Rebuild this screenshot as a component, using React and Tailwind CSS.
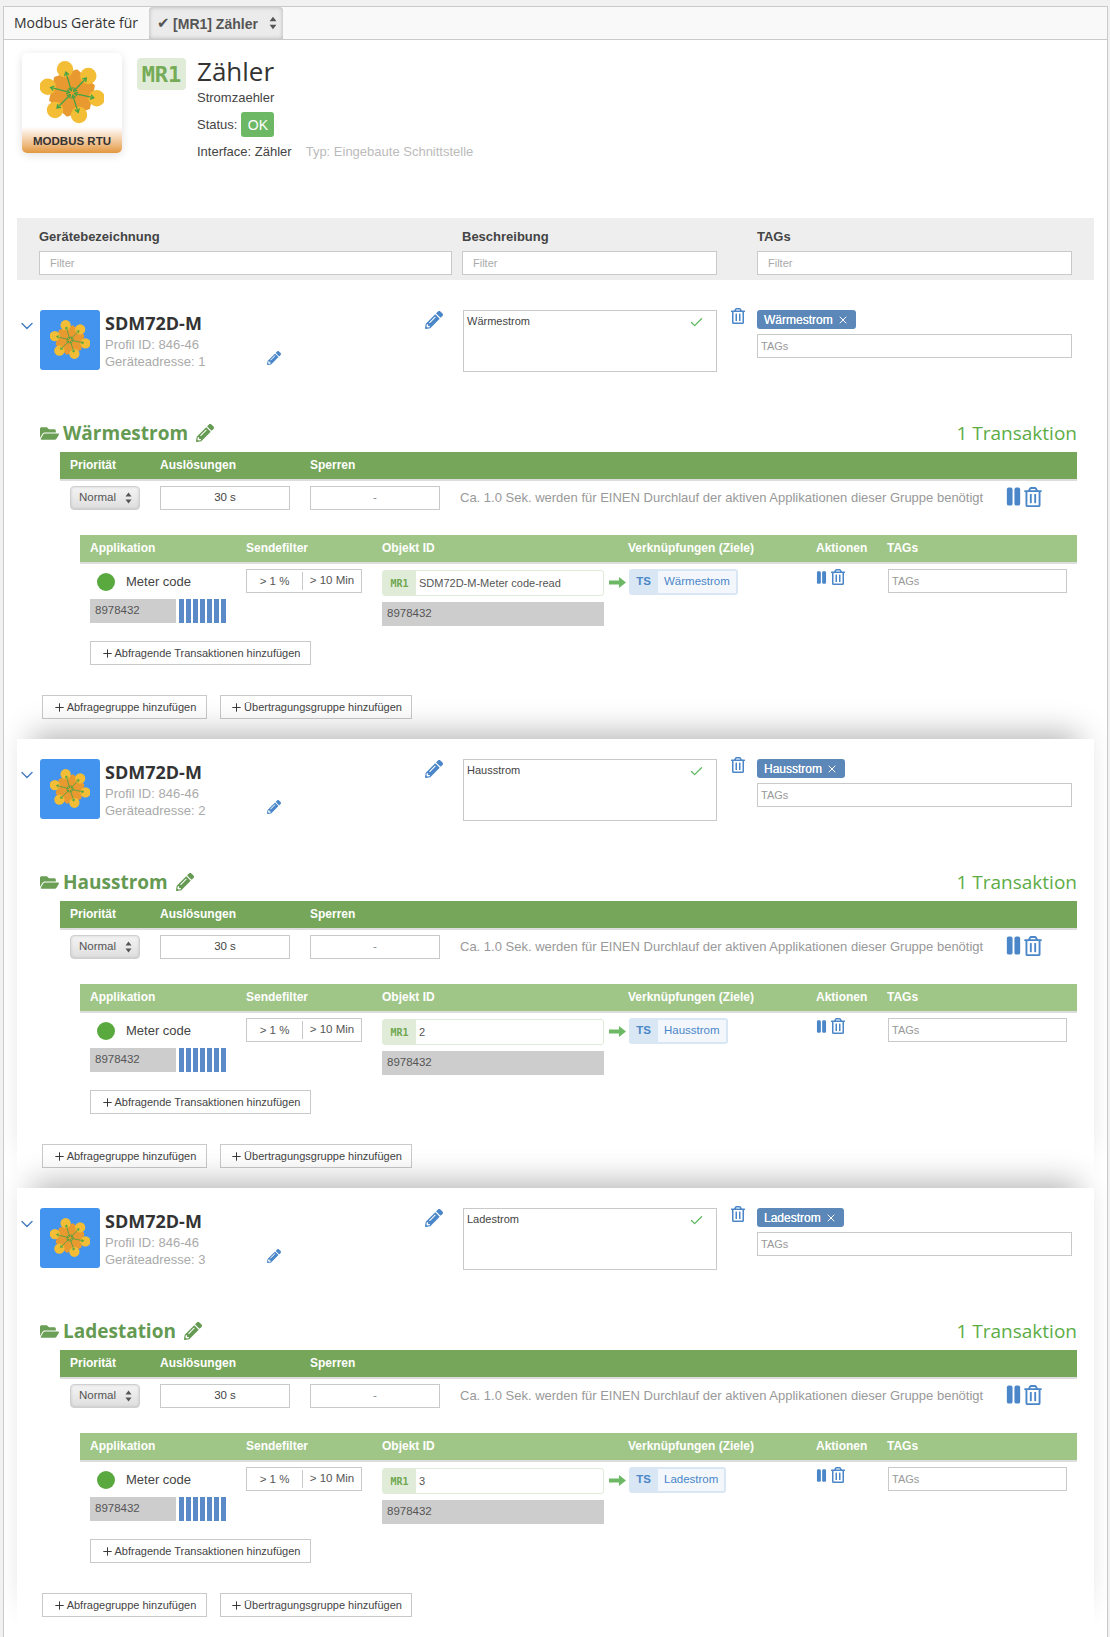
import React from "react";
import { FaPencilAlt, FaFolderOpen, FaRegTrashAlt } from "react-icons/fa";
import { Plus, X, Check, ChevronDown } from "lucide-react";

const sans = "font-['Liberation_Sans',Arial,sans-serif]";
const open = "font-['Open_Sans',sans-serif]";
const mono = "font-['DejaVu_Sans_Mono',monospace]";

const pts = [
  [-7, -23.7],
  [16.3, -17],
  [24.7, 5.3],
  [7, 22],
  [-17, 17],
  [-24.3, -6.3],
];

function Logo({ size }) {
  return (
    <svg width={size} height={size} viewBox="-32 -32 64 64" className="block">
      <polygon points="-12,-21 12,-21 24,0 12,21 -12,21 -24,0" fill="#e8992f" transform="rotate(42)" />
      {pts.map(([x, y], i) => (
        <circle key={i} cx={x} cy={y} r="8.2" fill="#f4bd36" />
      ))}
      {pts.map(([x, y], i) => {
        const a = Math.atan2(y, x);
        const c = Math.cos(a);
        const s = Math.sin(a);
        const tx = x * 0.88;
        const ty = y * 0.88;
        const sx = 2.5 * c;
        const sy = 2.5 * s;
        const hx = (bx, by) => `${bx},${by}`;
        return (
          <g key={i} stroke="#45a345" strokeWidth="1.3" fill="none">
            <line x1={sx} y1={sy} x2={tx} y2={ty} />
            <polyline
              points={`${hx(tx - 3.4 * c + 2.4 * s, ty - 3.4 * s - 2.4 * c)} ${hx(tx, ty)} ${hx(tx - 3.4 * c - 2.4 * s, ty - 3.4 * s + 2.4 * c)}`}
            />
            <polyline
              points={`${hx(sx + 3 * c + 2 * s, sy + 3 * s - 2 * c)} ${hx(sx, sy)} ${hx(sx + 3 * c - 2 * s, sy + 3 * s + 2 * c)}`}
            />
          </g>
        );
      })}
    </svg>
  );
}

function UpDown({ className, w = 7, h = 12 }) {
  return (
    <svg width={w} height={h} viewBox="0 0 7 12" className={className}>
      <path d="M3.5 0.5L6.5 4.5H0.5Z M3.5 11.5L0.5 7.5H6.5Z" fill="#555" />
    </svg>
  );
}

function Pause({ w, h, className = "" }) {
  return (
    <svg width={w} height={h} viewBox="0 0 15 20" className={`shrink-0 ${className}`}>
      <rect x="0.5" y="0.5" width="6" height="19" rx="2" fill="#4a86c8" />
      <rect x="8.5" y="0.5" width="6" height="19" rx="2" fill="#4a86c8" />
    </svg>
  );
}

function ThickArrow({ className = "" }) {
  return (
    <svg width="17" height="11" viewBox="0 0 17 11" className={`shrink-0 ${className}`}>
      <path d="M0 3.5H10V0L17 5.5L10 11V7.5H0Z" fill="#6cb865" />
    </svg>
  );
}

function Box({ className = "", children }) {
  return (
    <div className={`h-6 border border-[#c9c9c9] bg-white flex items-center ${className}`}>
      {children}
    </div>
  );
}

function AddButton({ children, className = "" }) {
  return (
    <div className={`h-6 border border-[#c9c9c9] bg-white flex items-center justify-center gap-[1px] text-[11px] text-[#444] ${className}`}>
      <Plus size={13} strokeWidth={1.8} className="text-[#333]" />
      <span>{children}</span>
    </div>
  );
}

function Device({ desc, addr, tag, group, obj, shadow }) {
  return (
    <section className={`relative h-[449px] w-[1077px] bg-white pt-5 ${shadow ? "shadow-[0_-20px_30px_-15px_rgba(0,0,0,0.3)]" : ""}`}>
      <div className="flex items-start">
        <ChevronDown size={20} strokeWidth={1.8} className="mt-[6px] w-[20px] text-[#4a80c4]" />
        <div className="ml-[3px] w-[60px] h-[60px] rounded-[3px] bg-[#4394ee] flex items-center justify-center">
          <Logo size={40} />
        </div>
        <div className="ml-[5px] w-[162px] shrink-0 text-[13px]">
          <div className={`${open} text-lg leading-[24px] mt-[1px] font-bold text-[#333]`}>SDM72D-M</div>
          <div className="text-[#aaa] mt-[1px] leading-[17px]">Profil ID: 846-46</div>
          <div className="text-[#aaa] leading-[17px]">Geräteadresse: {addr}</div>
        </div>
        <FaPencilAlt size={14} className="text-[#4a86c8] mt-[41px] shrink-0" />
        <FaPencilAlt size={18} className="text-[#4a86c8] mt-px ml-[144px] shrink-0" />
        <div className="ml-[20px] w-[254px] h-[62px] border border-[#c9c9c9] flex justify-between px-[3px] pr-[12px] pt-[2px] text-[11px] text-[#444] shrink-0">
          <span>{desc}</span>
          <Check size={15} strokeWidth={2} className="text-[#5cb85c] mt-[2px]" />
        </div>
        <FaRegTrashAlt size={16} className="text-[#4a86c8] ml-[13px] -mt-[2px] shrink-0" />
        <div className="ml-[11px] w-[315px]">
          <div className="flex w-fit h-[19px] items-center gap-[4px] rounded-[3px] bg-[#5b88b8] px-[7px] text-xs text-white">
            <span className="[text-shadow:0_0_0.4px_#fff]">{tag}</span>
            <X size={12} strokeWidth={2} />
          </div>
          <Box className="mt-[5px] px-[3px] text-[11px] text-[#999]">TAGs</Box>
        </div>
      </div>

      <div className="mt-[48px] h-[26px] flex items-center pl-[23px] pr-[17px]">
        <FaFolderOpen size={19} className="text-[#6a9f55]" />
        <h2 className={`${open} ml-[4px] text-[19px] font-bold text-[#659a52]`}>{group}</h2>
        <FaPencilAlt size={18} className="ml-[8px] text-[#659a52]" />
        <div className={`${open} ml-auto text-[19px] text-[#5cad45]`}>1 Transaktion</div>
      </div>

      <div className="ml-[43px] w-[1017px] mt-[6px]">
        <div className="h-[29px] bg-[#76a65a] border-b-2 border-[#dddddd] flex items-center pl-[10px] pb-px text-xs font-bold text-white">
          <div className="w-[90px]">Priorität</div>
          <div className="w-[150px]">Auslösungen</div>
          <div>Sperren</div>
        </div>
        <div className="mt-[5px] flex items-start pl-[10px]">
          <div className="w-[70px] h-6 rounded-[4px] border border-[#cfcfcf] bg-gradient-to-b from-[#f4f4f4] to-[#dedede] shadow-[inset_0_0_3px_rgba(0,0,0,0.15)] flex items-center justify-between pl-[8px] pr-[7px] text-[11.5px] text-[#555]">
            Normal <UpDown />
          </div>
          <Box className="ml-5 w-[130px] justify-center text-[11.5px] text-[#444]">30 s</Box>
          <Box className="ml-5 w-[130px] justify-center text-[11.5px] text-[#888]">-</Box>
          <div className="ml-5 w-[547px] h-6 flex items-center whitespace-nowrap text-[13px] text-[#999]">
            Ca. 1.0 Sek. werden für EINEN Durchlauf der aktiven Applikationen dieser Gruppe benötigt
          </div>
          <Pause w={15} h={19} className="mt-[1px] -ml-[1px]" />
          <FaRegTrashAlt size={20} className="text-[#4a86c8] ml-[2px] mt-px" />
        </div>

        <div className="ml-[20px] mt-[25px]">
          <div className="h-[29px] bg-[#9fc687] border-b-2 border-[#dddddd] flex items-center pl-[10px] pb-px text-xs font-bold text-white">
            <div className="w-[156px]">Applikation</div>
            <div className="w-[136px]">Sendefilter</div>
            <div className="w-[246px]">Objekt ID</div>
            <div className="w-[188px]">Verknüpfungen (Ziele)</div>
            <div className="w-[71px]">Aktionen</div>
            <div>TAGs</div>
          </div>
          <div className="h-[77px] flex items-start pl-[10px]">
            <div className="w-[156px] pt-[9px] shrink-0">
              <div className="flex items-center ml-[7px] h-[18px] text-[13px] text-[#444]">
                <span className="w-[18px] h-[18px] rounded-full bg-[#5aa93f]" />
                <span className="ml-[11px]">Meter code</span>
              </div>
              <div className="mt-2 flex">
                <div className="w-[86px] h-6 bg-[#cdcdcd] flex items-center pl-[5px] text-[11.5px] text-[#555]">8978432</div>
                <div className="ml-[3px] flex gap-[2px]">
                  {[0, 1, 2, 3, 4, 5, 6].map((i) => (
                    <span key={i} className="w-[5px] h-6 bg-[#5a8bc8]" />
                  ))}
                </div>
              </div>
            </div>
            <div className="w-[136px] shrink-0 pt-[5px]">
              <Box className="w-[116px] text-[11.5px] text-[#555]">
                <span className="w-[56px] text-center border-r border-[#c9c9c9] leading-[18px]">&gt; 1 %</span>
                <span className="flex-1 text-center">&gt; 10 Min</span>
              </Box>
            </div>
            <div className="w-[222px] shrink-0 pt-[6px]">
              <div className="h-[26px] rounded-[3px] border border-[#e0ecd8] flex items-stretch text-[11px] text-[#555]">
                <span className={`${mono} w-[33px] bg-[#e0ecd8] flex items-center justify-center text-[10px] font-bold text-[#6fa750]`}>MR1</span>
                <span className="ml-[3px] flex items-center">{obj}</span>
              </div>
              <div className="mt-[6px] h-6 bg-[#cdcdcd] flex items-center pl-[5px] text-[11.5px] text-[#555]">8978432</div>
            </div>
            <ThickArrow className="ml-[5px] mt-[13px]" />
            <div className="ml-[3px] mt-[5px] h-[26px] rounded-[3px] bg-[#d9e6f4] p-[2px] pl-0 flex items-stretch text-[11.5px] text-[#4a86c8]">
              <span className="w-[29px] flex items-center justify-center -mt-[1px] font-bold">TS</span>
              <span className="px-[6px] bg-[#f3f7fc] flex items-center">{group === "Ladestation" ? "Ladestrom" : tag}</span>
            </div>
            <div className="absolute left-[799px] flex items-start mt-[5px]">
              <Pause w={11} h={13} className="mt-[2px]" />
              <FaRegTrashAlt size={16} className="text-[#4a86c8] ml-[3px]" />
            </div>
            <Box className="absolute left-[871px] mt-[5px] w-[179px] px-[3px] text-[11px] text-[#999]">TAGs</Box>
          </div>
          <AddButton className="ml-[10px] w-[221px]">Abfragende Transaktionen hinzufügen</AddButton>
        </div>
      </div>

      <div className="mt-[30px] ml-[25px] flex gap-[13px]">
        <AddButton className="w-[165px]">Abfragegruppe hinzufügen</AddButton>
        <AddButton className="w-[192px]">Übertragungsgruppe hinzufügen</AddButton>
      </div>
    </section>
  );
}

export default function App() {
  return (
    <div className={`${sans} h-[1637px] overflow-hidden bg-[#f1f1f1] pt-[6px] px-[2px] pl-[3px]`}>
      <div className="h-[1631px] overflow-hidden border-x border-t border-[#cacaca] bg-white">
        <header className="h-[33px] bg-[#f9f9f9] border-b border-[#cacaca] flex items-stretch">
          <div className={`${open} ml-[10px] flex items-center text-sm text-[#333]`}>Modbus Geräte für</div>
          <div className="ml-[11px] w-[134px] h-[32px] rounded-t-[4px] bg-[#ebebeb] shadow-[inset_0_0_4px_rgba(0,0,0,0.25)] flex items-center justify-between pl-[8px] pr-[6px] text-sm font-bold text-[#555]">
            <span className="flex items-center mt-px">
              <span className="font-['DejaVu_Sans',sans-serif] font-normal text-[15px] w-[16px] leading-none">✔</span>[MR1] Zähler
            </span>
            <UpDown w={8} h={14} />
          </div>
        </header>

        <div className="px-[13px]">
          <div className="h-[178px] flex items-start pt-[13px] pl-[5px]">
            <div className="w-[100px] h-[100px] rounded-[5px] shadow-[0_2px_10px_rgba(0,0,0,0.12)] bg-white flex flex-col items-center overflow-hidden">
              <div className="h-[74px] w-full flex justify-center pt-[8px]">
                <Logo size={64} />
              </div>
              <div className="flex-1 w-full bg-gradient-to-b from-[#ffffff] to-[#e3983a] flex items-end justify-center pb-[3px] text-[11.5px] font-bold text-[#333]">
                MODBUS RTU
              </div>
            </div>
            <div className={`${mono} ml-[15px] mt-[5px] w-[49px] h-[32px] rounded-[4px] bg-[#e0ecd8] flex items-center justify-center text-[22px] font-bold text-[#76ab57]`}>
              MR1
            </div>
            <div className="ml-[11px] text-[13px] text-[#444]">
              <h1 className={`${open} text-[26px] leading-[36px] text-[#333]`}>Zähler</h1>
              <div className="leading-[18px]">Stromzaehler</div>
              <div className="mt-[5px] flex items-center">
                Status:
                <span className="ml-1 w-[33px] h-[25px] rounded-[3px] bg-[#6cb865] flex items-center justify-center text-sm text-white">OK</span>
              </div>
              <div className="mt-[6px] leading-[18px]">
                Interface: Zähler
                <span className="ml-[14px] text-[#bbb]">Typ: Eingebaute Schnittstelle</span>
              </div>
            </div>
          </div>

          <div className="h-[62px] w-[1077px] bg-[#eeeeee] flex items-start pl-[22px] pt-[11px] mb-[10px] text-[13px] font-bold text-[#444]">
            <div className="w-[423px]">
              <div className="leading-[16px] mb-[6px]">Gerätebezeichnung</div>
              <Box className="w-[413px] px-[10px] text-[11px] font-normal text-[#aaa]">Filter</Box>
            </div>
            <div className="w-[295px]">
              <div className="leading-[16px] mb-[6px]">Beschreibung</div>
              <Box className="w-[255px] px-[10px] text-[11px] font-normal text-[#aaa]">Filter</Box>
            </div>
            <div>
              <div className="leading-[16px] mb-[6px]">TAGs</div>
              <Box className="w-[315px] px-[10px] text-[11px] font-normal text-[#aaa]">Filter</Box>
            </div>
          </div>

          <Device desc="Wärmestrom" addr="1" tag="Wärmestrom" group="Wärmestrom" obj="SDM72D-M-Meter code-read" />
          <Device desc="Hausstrom" addr="2" tag="Hausstrom" group="Hausstrom" obj="2" shadow />
          <Device desc="Ladestrom" addr="3" tag="Ladestrom" group="Ladestation" obj="3" shadow />
        </div>
      </div>
    </div>
  );
}
